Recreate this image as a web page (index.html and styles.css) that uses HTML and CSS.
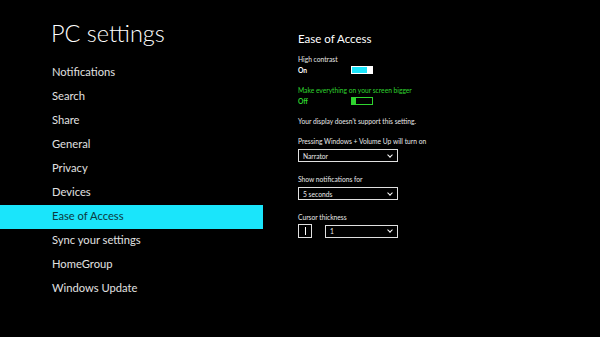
FILE: index.html
```html
<!DOCTYPE html>
<html lang="en">
<head>
    <meta charset="UTF-8">
    <title>PC settings</title>
    <link rel="stylesheet" href="styles.css">
</head>
<body>
    <div class="page">
        <div class="sidebar">
            <h1 class="title">PC settings</h1>
            <ul class="menu">
                <li>Notifications</li>
                <li>Search</li>
                <li>Share</li>
                <li>General</li>
                <li>Privacy</li>
                <li>Devices</li>
                <li class="active">Ease of Access</li>
                <li>Sync your settings</li>
                <li>HomeGroup</li>
                <li>Windows Update</li>
            </ul>
        </div>
        <div class="content">
            <h2 class="heading">Ease of Access</h2>

            <div class="label">High contrast</div>
            <div class="toggle-row">
                <span class="state">On</span>
                <span class="toggle on"><span class="thumb"></span></span>
            </div>

            <div class="label green">Make everything on your screen bigger</div>
            <div class="toggle-row green">
                <span class="state">Off</span>
                <span class="toggle off"><span class="thumb"></span></span>
            </div>

            <div class="note">Your display doesn't support this setting.</div>

            <div class="label">Pressing Windows + Volume Up will turn on</div>
            <div class="select">Narrator<span class="chev"></span></div>

            <div class="label">Show notifications for</div>
            <div class="select">5 seconds<span class="chev"></span></div>

            <div class="label">Cursor thickness</div>
            <div class="cursor-row">
                <div class="preview"><span class="caret"></span></div>
                <div class="select small">1<span class="chev"></span></div>
            </div>
        </div>
    </div>
</body>
</html>
```

FILE: styles.css
```css
body{
    margin:0;
    padding:0;
    background:#000;
    color:#fff;
    font-family:Lato,"Open Sans",sans-serif;
}
.page{
    display:flex;
    width:600px;
    height:337px;
    overflow:hidden;
}
.sidebar{
    width:263px;
}
.title{
    margin:0;
    padding:20px 0 0 51px;
    height:61px;
    box-sizing:border-box;
    font-size:23.5px;
    font-weight:300;
    line-height:26px;
    color:#fff;
}
.menu{
    list-style:none;
    margin:0;
    padding:0;
}
.menu li{
    height:24px;
    line-height:22px;
    padding-left:52px;
    font-size:11.2px;
    color:#e0e0e0;
}
.menu li.active{
    background:#1ae5fb;
    color:#0c3a40;
}
.content{
    padding:31px 0 0 35px;
    font-size:6.7px;
}
.heading{
    margin:0 0 7px;
    font-size:11.5px;
    font-weight:400;
    line-height:16px;
}
.label{
    line-height:10px;
    color:#e8e8e8;
}
.green{
    color:#2fd42f;
}
.toggle-row{
    display:flex;
    align-items:center;
    height:12px;
    margin-bottom:9px;
}
.state{
    width:53px;
    font-weight:700;
}
.toggle{
    display:flex;
    width:22px;
    height:8px;
    box-sizing:border-box;
    border:1.5px solid #fff;
}
.toggle.on{
    justify-content:flex-end;
    background:#1ae5fb;
}
.toggle.on .thumb{
    width:5px;
    background:#fff;
}
.toggle.off{
    border-color:#2fd42f;
    background:#000;
}
.toggle.off .thumb{
    width:4px;
    background:#2fd42f;
}
.note{
    margin:7px 0 10px;
    line-height:10px;
    color:#e8e8e8;
}
.select{
    display:flex;
    align-items:center;
    justify-content:space-between;
    width:100px;
    height:13px;
    box-sizing:border-box;
    border:1px solid #e0e0e0;
    padding:0 5px 0 4px;
    margin:3px 0 12px;
    color:#e8e8e8;
}
.chev{
    width:3px;
    height:3px;
    border-right:1.5px solid #fff;
    border-bottom:1.5px solid #fff;
    transform:rotate(45deg);
    margin-top:-2px;
}
.cursor-row{
    display:flex;
    align-items:center;
    margin-top:2px;
}
.preview{
    display:flex;
    align-items:center;
    justify-content:center;
    width:14px;
    height:14px;
    box-sizing:border-box;
    border:1px solid #e0e0e0;
    margin-right:13px;
}
.caret{
    width:1px;
    height:8px;
    background:#fff;
}
.select.small{
    width:73px;
    margin:0;
}
```
